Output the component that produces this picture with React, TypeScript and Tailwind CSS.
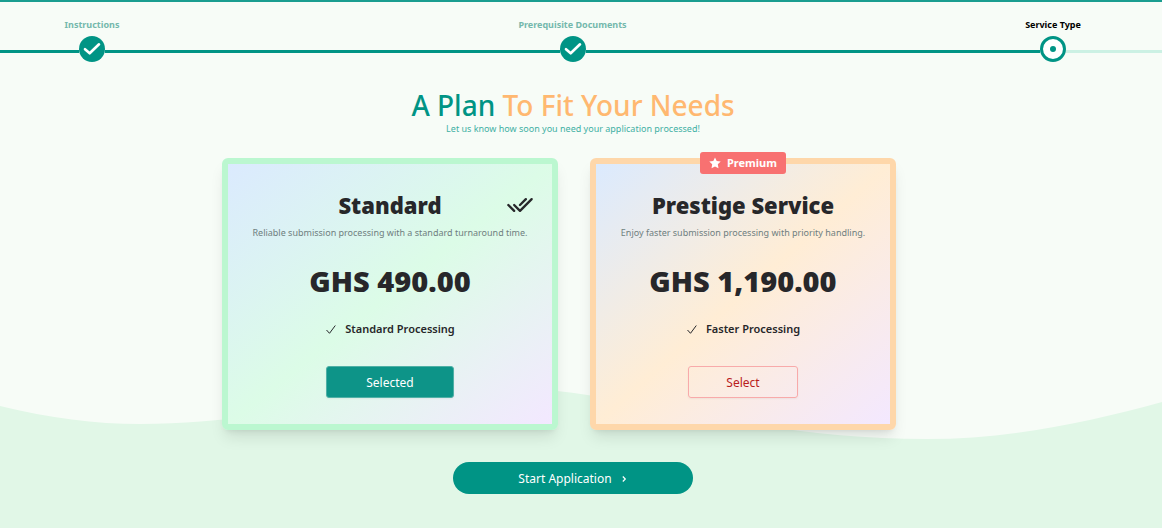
import { TbChecks } from "react-icons/tb";

type Plan = {
  name: string;
  blurb: string;
  price: string;
  feature: string;
};

const standard: Plan = {
  name: "Standard",
  blurb: "Reliable submission processing with a standard turnaround time.",
  price: "GHS 490.00",
  feature: "Standard Processing",
};

const prestige: Plan = {
  name: "Prestige Service",
  blurb: "Enjoy faster submission processing with priority handling.",
  price: "GHS 1,190.00",
  feature: "Faster Processing",
};

function DoneStep({ label }: { label: string }) {
  return (
    <li className="flex w-[26px] shrink-0 flex-col items-center">
      <span className="mb-[3px] h-4 text-[9px] leading-4 font-bold whitespace-nowrap text-[#74b8ac]">{label}</span>
      <span className="flex size-[26px] items-center justify-center rounded-full bg-[#009485]">
        <svg viewBox="0 0 26 26" className="size-[26px]" fill="none" stroke="white" strokeWidth="2.6" strokeLinecap="round" strokeLinejoin="round" aria-hidden="true">
          <path d="M6 13.2 10.7 17.3 20 8.3" />
        </svg>
      </span>
    </li>
  );
}

function CurrentStep({ label }: { label: string }) {
  return (
    <li aria-current="step" className="flex w-[26px] shrink-0 flex-col items-center">
      <span className="mb-[3px] h-4 text-[9px] leading-4 font-bold whitespace-nowrap text-black">{label}</span>
      <span className="flex size-[26px] items-center justify-center rounded-full border-3 border-[#009485] bg-white">
        <span className="size-[6px] rounded-full bg-[#009485]" />
      </span>
    </li>
  );
}

function PlanDetails({ plan }: { plan: Plan }) {
  return (
    <>
      <p className="mt-[2px] text-[9px] leading-4 whitespace-nowrap text-[#6f7f7f]">{plan.blurb}</p>
      <p className="mt-[22px] text-[29px] leading-9 font-black text-[#27272a]">{plan.price}</p>
      <p className="mt-5 flex items-center gap-2 text-[11px] leading-5 font-semibold text-[#27272a]">
        <svg viewBox="0 0 12 12" className="size-3" fill="none" stroke="currentColor" strokeWidth="1" aria-hidden="true">
          <path d="M1.5 7 4.5 10.3 10.3 2.5" />
        </svg>
        {plan.feature}
      </p>
    </>
  );
}

export default function App() {
  return (
    <div className="relative isolate min-h-screen overflow-hidden border-t-2 border-[#1a9d90] bg-[#f7fcf7] font-['Noto_Sans','Open_Sans',sans-serif]">
      <svg viewBox="0 385 1162 143" preserveAspectRatio="none" className="absolute bottom-0 left-0 -z-10 h-[143px] w-full" aria-hidden="true">
        <path fill="#e1f7e7" d="M0 406C50 418 95 424 140 424C280 424 370 386 480 386C620 386 740 439 927 439C1010 439 1090 422 1162 402V528H0Z" />
      </svg>

      <ol className="flex items-end pt-[15px]">
        <li aria-hidden="true" className="mb-[9px] h-[3px] w-[79px] bg-[#009485]" />
        <DoneStep label="Instructions" />
        <li aria-hidden="true" className="mb-[9px] h-[3px] flex-1 bg-[#009485]" />
        <DoneStep label="Prerequisite Documents" />
        <li aria-hidden="true" className="mb-[9px] h-[3px] flex-1 bg-[#009485]" />
        <CurrentStep label="Service Type" />
        <li aria-hidden="true" className="mb-[9px] h-[3px] w-24 bg-[#ccf1e4]" />
      </ol>

      <main className="flex flex-col items-center pt-[25px] pr-4 pb-8">
        <h1 className="text-[28px] leading-9 font-medium text-[#ffb870]">
          <span className="text-[#009485]">A Plan</span> To Fit Your Needs
        </h1>
        <p className="text-[9px] leading-3 text-[#3fb0a4]">Let us know how soon you need your application processed!</p>

        <div className="mt-[23px] flex flex-wrap items-stretch justify-center gap-8 pr-7">
          <section className="flex w-[336px] flex-col items-center rounded-md border-6 border-[#bbf7d0] bg-linear-to-br from-[#dbeafe] via-[#dcfce7] to-[#f3e8ff] px-4 pt-[23px] pb-[26px] shadow-lg">
            <div className="grid w-full grid-cols-[1fr_auto_1fr] items-center">
              <h2 className="col-start-2 text-[22px] leading-9 font-black text-[#27272a]">{standard.name}</h2>
              <TbChecks className="mr-[2px] size-7 justify-self-end text-[#27272a]" aria-hidden="true" />
            </div>
            <PlanDetails plan={standard} />
            <button type="button" className="mt-[27px] h-8 w-32 rounded-[3px] border border-[#4fb0a6] bg-[#0d9488] pt-[2px] text-[12px] text-white shadow-xs">
              Selected
            </button>
          </section>

          <section className="relative flex w-[306px] flex-col items-center rounded-md border-6 border-[#fed7aa] bg-linear-to-br from-[#dbeafe] via-[#ffedd5] to-[#f3e8ff] px-4 pt-[23px] pb-[26px] shadow-lg">
            <span className="absolute -top-3 left-1/2 flex h-[22px] w-[86px] -translate-x-1/2 items-center justify-center gap-[6px] rounded-[3px] bg-[#f87171] text-[11px] font-bold text-white">
              <svg viewBox="0 0 12 12" className="size-3" fill="currentColor" aria-hidden="true">
                <path d="M6 .4 7.7 4 11.7 4.5 8.8 7.3 9.5 11.3 6 9.4 2.5 11.3 3.2 7.3 .3 4.5 4.3 4Z" />
              </svg>
              Premium
            </span>
            <h2 className="text-[22px] leading-9 font-black text-[#27272a]">{prestige.name}</h2>
            <PlanDetails plan={prestige} />
            <button type="button" className="mt-[27px] h-8 w-[110px] rounded-[3px] border border-[#f8aaaa] pt-[2px] text-[12px] text-[#b91c1c] shadow-xs">
              Select
            </button>
          </section>
        </div>

        <button type="button" className="mt-8 flex h-8 w-60 items-center justify-center gap-2 rounded-full bg-[#009485] pt-[2px] text-[12px] text-white">
          Start Application
          <svg viewBox="0 0 8 8" className="size-2" fill="none" stroke="currentColor" strokeWidth="1.2" aria-hidden="true">
            <path d="M2.8 1.5 5.3 4 2.8 6.5" />
          </svg>
        </button>
      </main>
    </div>
  );
}
